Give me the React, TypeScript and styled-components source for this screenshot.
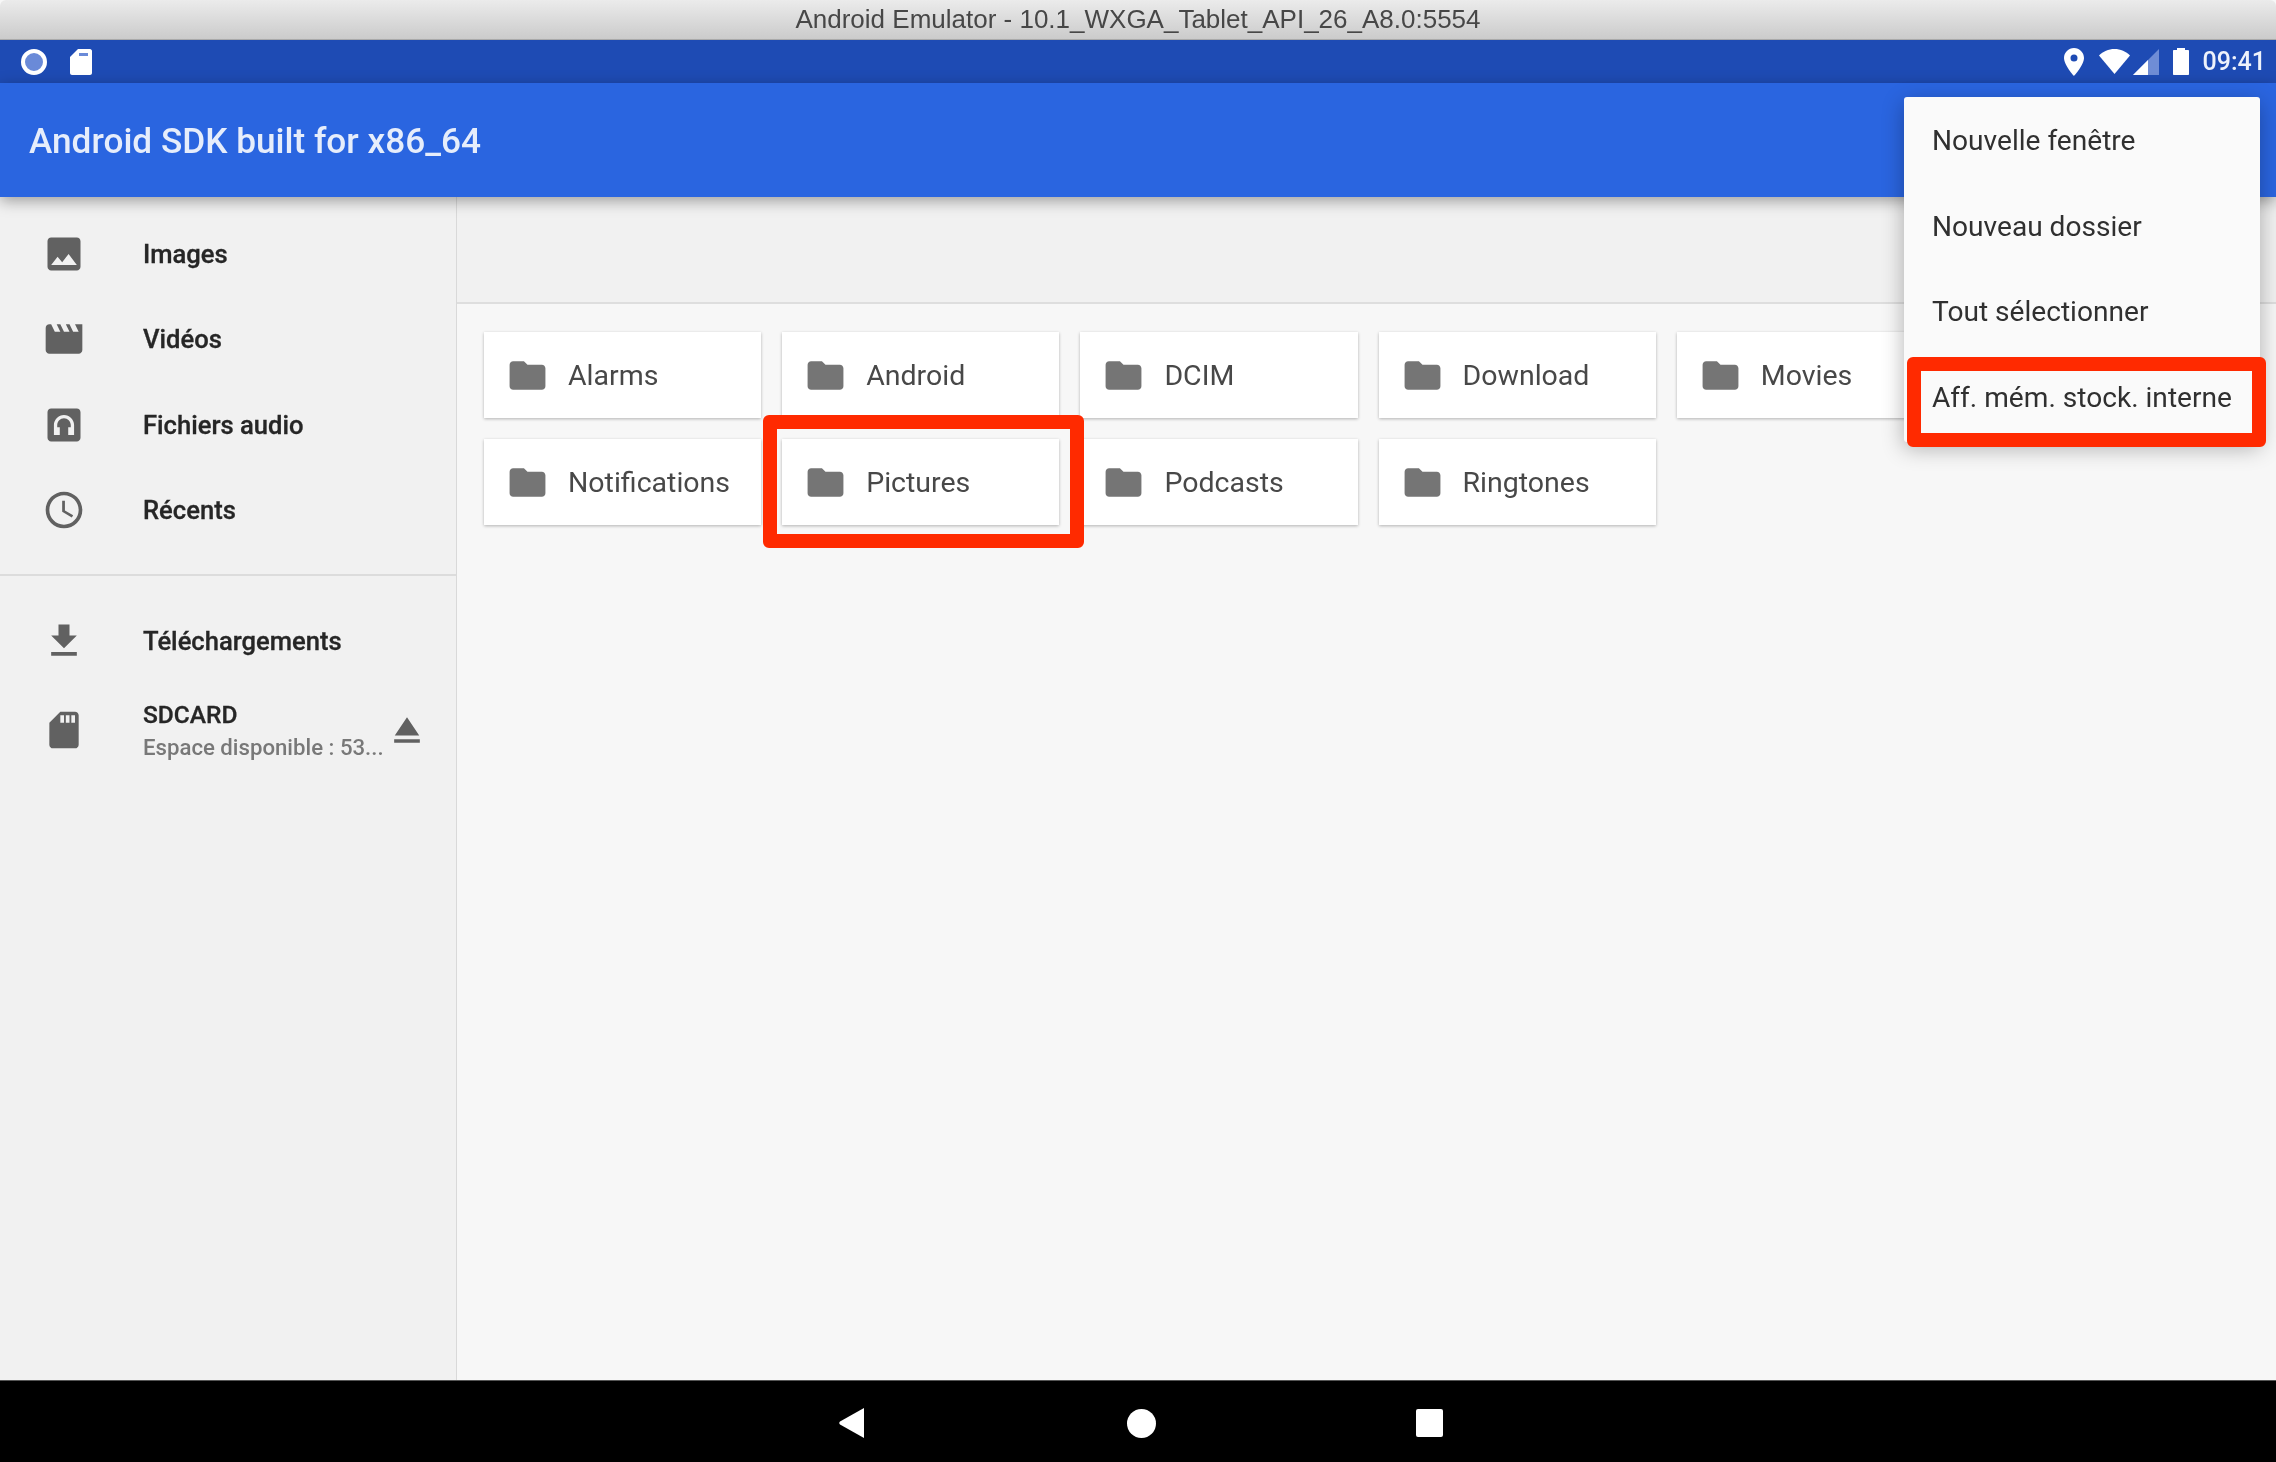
import styled, { createGlobalStyle } from "styled-components"

const GlobalStyle = createGlobalStyle`
    html, body {
        margin: 0;
        padding: 0;
        background: #000;
    }
    * {
        box-sizing: border-box;
    }
`

const Screen = styled.div`
    position: relative;
    display: flex;
    flex-direction: column;
    width: 2276px;
    height: 1462px;
    overflow: hidden;
    font-family: Roboto, "Liberation Sans", sans-serif;
    background: #f7f7f7;
    filter: blur(0.5px);
`

const TitleBar = styled.header`
    display: flex;
    align-items: center;
    justify-content: center;
    flex: 0 0 40px;
    padding-bottom: 1px;
    background: linear-gradient(#ebebeb, #cbcbcb);
    border-bottom: 1px solid #a9a9a9;
    border-radius: 6px 6px 0 0;
    font-family: "Liberation Sans", Arial, sans-serif;
    font-size: 26px;
    color: #474747;
`

const StatusBar = styled.div`
    display: flex;
    align-items: center;
    flex: 0 0 43px;
    padding: 0 10px 0 20px;
    background: #1e4bb4;
`

const StatusLeft = styled.div`
    display: flex;
    align-items: center;
    gap: 22px;
`

const StatusRight = styled.div`
    display: flex;
    align-items: center;
    margin-left: auto;
`

const StatusIcon = styled.svg<{ $ml?: number }>`
    display: block;
    margin-left: ${p => p.$ml ?? 0}px;
`

const Clock = styled.span`
    margin-left: 14px;
    font-size: 25px;
    font-weight: 500;
    color: #eef2fb;
`

const AppBar = styled.div`
    position: relative;
    z-index: 2;
    display: flex;
    align-items: center;
    flex: 0 0 114px;
    padding: 2px 0 0 29px;
    background: #2a65e0;
    box-shadow: 0 4px 14px rgba(0, 0, 0, 0.35);
`

const AppTitle = styled.h1`
    margin: 0;
    font-size: 35.2px;
    font-weight: 500;
    color: #e6edfb;
`

const Body = styled.div`
    display: flex;
    flex: 1;
    min-height: 0;
`

const Sidebar = styled.nav`
    display: flex;
    flex-direction: column;
    flex: 0 0 457px;
    padding-top: 14px;
    background: #f1f1f1;
    border-right: 1.5px solid #d9d9d9;
`

const Row = styled.div<{ $tall?: boolean }>`
    display: flex;
    align-items: center;
    height: ${p => (p.$tall ? 92 : 85.5)}px;
    padding-left: 42px;
`

const RowIcon = styled.svg`
    display: block;
    flex: none;
    width: 44px;
    height: 44px;
    fill: #616161;
`

const RowText = styled.div`
    display: flex;
    flex-direction: column;
    gap: 5px;
    margin-left: 57px;
    width: 242px;
`

const RowLabel = styled.span<{ $small?: boolean }>`
    font-size: ${p => (p.$small ? 24.5 : 25.6)}px;
    font-weight: 500;
    color: #262626;
    -webkit-text-stroke: 0.3px #262626;
`

const RowSub = styled.span`
    font-size: 22.2px;
    font-weight: 500;
    color: #787878;
    white-space: nowrap;
`

const Divider = styled.hr`
    width: 100%;
    height: 2px;
    margin: 21px 0 22px;
    border: 0;
    background: #dcdcdc;
`

const Content = styled.main`
    display: flex;
    flex-direction: column;
    flex: 1;
`

const Toolbar = styled.div`
    flex: 0 0 107px;
    background: #f1f1f1;
    border-bottom: 2px solid #dedede;
`

const Grid = styled.div`
    display: grid;
    grid-template-columns: repeat(5, 277.2px);
    grid-auto-rows: 86px;
    column-gap: 21px;
    row-gap: 21px;
    padding: 28px 0 0 27px;
`

const Card = styled.div`
    display: flex;
    align-items: center;
    padding-left: 22px;
    background: #fff;
    box-shadow: 0 1px 3px rgba(0, 0, 0, 0.28);
    font-size: 28.5px;
    color: #484848;
`

const FolderIcon = styled.svg`
    display: block;
    flex: none;
    width: 43px;
    height: 43px;
    margin-right: 19px;
    fill: #757575;
`

const NavBar = styled.footer`
    display: flex;
    align-items: center;
    flex: 0 0 82px;
    padding: 3px 0 0 839px;
    background: #000;
    border-top: 1px solid #555;
`

const NavBack = styled.svg`
    display: block;
    width: 25px;
    height: 30px;
    fill: #fff;
`

const NavHome = styled.span`
    display: block;
    width: 29px;
    height: 29px;
    margin-left: 263px;
    border-radius: 50%;
    background: #fff;
`

const NavRecent = styled.span`
    display: block;
    width: 27px;
    height: 28px;
    margin-left: 260px;
    border-radius: 2px;
    background: #fff;
`

const Menu = styled.ul`
    position: absolute;
    z-index: 3;
    top: 97px;
    left: 1904px;
    width: 356px;
    height: 345px;
    margin: 0;
    padding: 0;
    list-style: none;
    background: #fafafa;
    border-radius: 3px;
    box-shadow: 0 6px 22px rgba(0, 0, 0, 0.3);
`

const MenuItem = styled.li`
    display: flex;
    align-items: center;
    height: 85.5px;
    padding: 2px 0 0 28px;
    font-size: 28.1px;
    color: #303030;
`

const Highlight = styled.div<{ $left: number; $top: number; $width: number; $height: number }>`
    position: absolute;
    z-index: 4;
    left: ${p => p.$left}px;
    top: ${p => p.$top}px;
    width: ${p => p.$width}px;
    height: ${p => p.$height}px;
    border: 14px solid #ff2a00;
    border-radius: 6px;
`

const sideItems = [
    { label: "Images", d: "M21 19V5c0-1.1-.9-2-2-2H5c-1.1 0-2 .9-2 2v14c0 1.1.9 2 2 2h14c1.1 0 2-.9 2-2zM8.5 13.5l2.5 3.01L14.5 12l4.5 6H5l3.5-4.5z" },
    { label: "Vidéos", d: "M18 4l2 4h-3l-2-4h-2l2 4h-3l-2-4H8l2 4H7L5 4H4c-1.1 0-1.99.9-1.99 2L2 18c0 1.1.9 2 2 2h16c1.1 0 2-.9 2-2V4h-4z" },
    { label: "Fichiers audio", d: "M5 3h14c1.1 0 2 .9 2 2v14c0 1.1-.9 2-2 2H5c-1.1 0-2-.9-2-2V5c0-1.1.9-2 2-2zm1.5 14.5h3.2v-4.3H8.3V12c0-2 1.7-3.7 3.7-3.7s3.7 1.7 3.7 3.7v1.2h-1.4v4.3h3.2V12c0-3-2.5-5.5-5.5-5.5S6.500 9 6.500 12z" },
    { label: "Récents", d: "M11.99 2C6.47 2 2 6.48 2 12s4.47 10 9.99 10C17.52 22 22 17.52 22 12S17.52 2 11.99 2zM12 20c-4.42 0-8-3.58-8-8s3.58-8 8-8 8 3.58 8 8-3.58 8-8 8zM12.500 7H11v6l5.250 3.150.75-1.230-4.500-2.670z" },
]

const SD_PATH = "M18 2h-8L4.020 8 4 20c0 1.100.9 2 2 2h12c1.100 0 2-.9 2-2V4c0-1.100-.9-2-2-2zm-6 6h-2V4h2v4zm3 0h-2V4h2v4zm3 0h-2V4h2v4z"

const folders = ["Alarms", "Android", "DCIM", "Download", "Movies", "Notifications", "Pictures", "Podcasts", "Ringtones"]

const menuItems = ["Nouvelle fenêtre", "Nouveau dossier", "Tout sélectionner", "Aff. mém. stock. interne"]

export default function App() {
    return (
        <Screen>
            <GlobalStyle />
            <TitleBar>Android Emulator - 10.1_WXGA_Tablet_API_26_A8.0:5554</TitleBar>

            <StatusBar>
                <StatusLeft>
                    <svg width="28" height="28" viewBox="0 0 28 28">
                        <circle cx="14" cy="14" r="11" fill="#6a8ad8" stroke="#fff" strokeWidth="4" />
                    </svg>
                    <svg width="22" height="26" viewBox="0 0 22 26">
                        <path fill="#fff" d="M8 0h12c1 0 2 1 2 2v22c0 1-1 2-2 2H2c-1 0-2-1-2-2V8z" />
                        <path fill="#6a8ad8" d="M9 4h9v3H9z" />
                    </svg>
                </StatusLeft>
                <StatusRight>
                    <StatusIcon width="20" height="28" viewBox="0 0 20 28">
                        <path fill="#fff" fillRule="evenodd" d="M10 0C4.500 0 0 4.500 0 10c0 7 10 18 10 18s10-11 10-18c0-5.500-4.500-10-10-10zm0 13.500a3.500 3.500 0 1 1 0-7 3.500 3.500 0 0 1 0 7z" />
                    </StatusIcon>
                    <StatusIcon $ml={15} width="31" height="25" viewBox="0 0 31 25">
                        <path fill="#fff" d="M15.500 25L0 6.500C4 2.500 9.500 0 15.500 0S27 2.500 31 6.500z" />
                    </StatusIcon>
                    <StatusIcon $ml={3} width="26" height="26" viewBox="0 0 26 26">
                        <path fill="#6f8dd6" d="M26 0v26H0z" />
                        <path fill="#fff" d="M15 11v15H0z" />
                    </StatusIcon>
                    <StatusIcon $ml={14} width="16" height="27" viewBox="0 0 16 27">
                        <path fill="#fff" d="M4 0h8v2h3c.6 0 1 .4 1 1v23c0 .6-.4 1-1 1H1c-.6 0-1-.4-1-1V3c0-.6.4-1 1-1h3z" />
                    </StatusIcon>
                    <Clock>09:41</Clock>
                </StatusRight>
            </StatusBar>

            <AppBar>
                <AppTitle>Android SDK built for x86_64</AppTitle>
            </AppBar>

            <Body>
                <Sidebar>
                    {sideItems.map(item => (
                        <Row key={item.label}>
                            <RowIcon viewBox="0 0 24 24"><path fillRule="evenodd" d={item.d} /></RowIcon>
                            <RowText><RowLabel>{item.label}</RowLabel></RowText>
                        </Row>
                    ))}
                    <Divider />
                    <Row>
                        <RowIcon viewBox="0 0 24 24"><path d="M19 9h-4V3H9v6H5l7 7 7-7zM5 18v2h14v-2H5z" /></RowIcon>
                        <RowText><RowLabel>Téléchargements</RowLabel></RowText>
                    </Row>
                    <Row $tall>
                        <RowIcon viewBox="0 0 24 24"><path d={SD_PATH} /></RowIcon>
                        <RowText>
                            <RowLabel $small>SDCARD</RowLabel>
                            <RowSub>Espace disponible : 53...</RowSub>
                        </RowText>
                        <RowIcon viewBox="0 0 24 24"><path d="M5 17h14v2H5zm7-12L5.330 15h13.340z" /></RowIcon>
                    </Row>
                </Sidebar>

                <Content>
                    <Toolbar />
                    <Grid>
                        {folders.map(name => (
                            <Card key={name}>
                                <FolderIcon viewBox="0 0 24 24">
                                    <path d="M10 4H4c-1.100 0-1.990.9-1.990 2L2 18c0 1.100.9 2 2 2h16c1.100 0 2-.9 2-2V8c0-1.100-.9-2-2-2h-8l-2-2z" />
                                </FolderIcon>
                                {name}
                            </Card>
                        ))}
                    </Grid>
                </Content>
            </Body>

            <NavBar>
                <NavBack viewBox="0 0 25 30"><path d="M25 0v30L1 16.500c-1-.6-1-2.400 0-3z" /></NavBack>
                <NavHome />
                <NavRecent />
            </NavBar>

            <Menu>
                {menuItems.map(item => <MenuItem key={item}>{item}</MenuItem>)}
            </Menu>

            <Highlight $left={763} $top={415} $width={321} $height={133} />
            <Highlight $left={1907} $top={357} $width={359} $height={90} />
        </Screen>
    )
}
